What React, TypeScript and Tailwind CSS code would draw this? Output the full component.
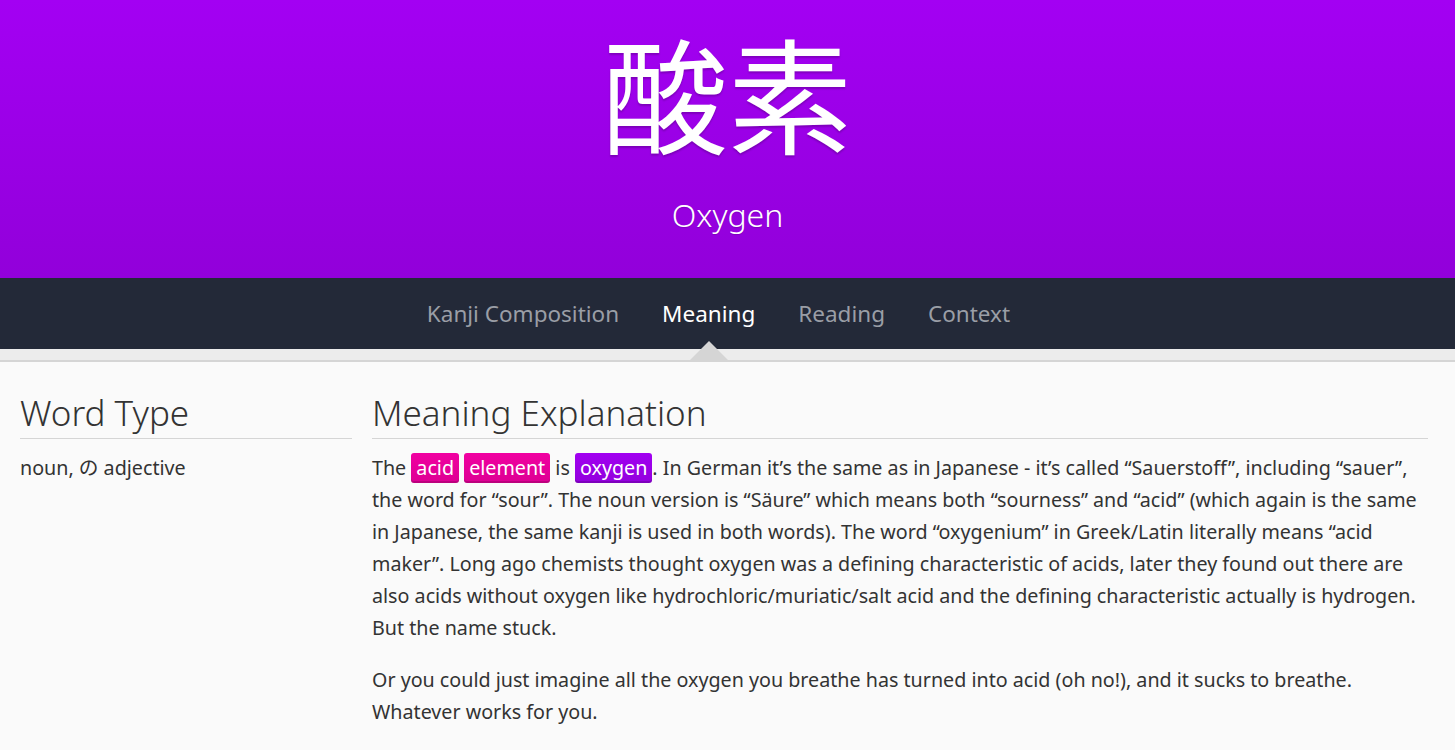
import React from "react";

const font = { fontFamily: '"Noto Sans", "Open Sans", "Noto Sans CJK JP", sans-serif' };

function Tag({ kind, children }: { kind: "pink" | "purple"; children: React.ReactNode }) {
  const cls =
    kind === "pink"
      ? "bg-gradient-to-b from-[#f100a1] to-[#dd0093] shadow-[inset_0_-2px_0_rgba(0,0,0,0.15)]"
      : "bg-gradient-to-b from-[#a100f1] to-[#9300dd] shadow-[inset_0_-2px_0_rgba(0,0,0,0.15)]";
  return (
    <span className={`${cls} inline-block rounded-[3px] px-[5px] leading-[30px] text-white`}>{children}</span>
  );
}

export default function App() {
  return (
    <div className="min-h-[750px] bg-[#fafafa] text-[#333]" style={font}>
      <header className="flex h-[278px] flex-col items-center bg-gradient-to-b from-[#a300f3] to-[#9200da] text-white">
        <div
          className="mt-[28px] text-[125px] leading-[125px] [text-shadow:0_2px_2px_rgba(0,0,0,0.2)]"
          style={{ fontFamily: '"Noto Sans CJK JP", sans-serif' }}
        >
          酸素
        </div>
        <div className="mt-[44px] text-[32px] font-light leading-[36px] [text-shadow:0_1px_1px_rgba(0,0,0,0.15)]">
          Oxygen
        </div>
      </header>
      <nav className="relative flex h-[71px] items-center justify-center gap-[43px] bg-[#232938] pr-[18px] text-[22.5px]">
        <span className="text-[#9a9ea6]">Kanji Composition</span>
        <span className="relative text-white">
          Meaning
          <span className="absolute left-1/2 top-[44px] z-10 h-0 w-0 -translate-x-1/2 border-x-[19px] border-b-[19px] border-x-transparent border-b-[#d5d5d5]" />
        </span>
        <span className="text-[#9a9ea6]">Reading</span>
        <span className="text-[#9a9ea6]">Context</span>
      </nav>
      <div className="h-[13px] border-b-2 border-[#d5d5d5] bg-[#ececec]" />
      <main className="grid grid-cols-[332px_1fr] gap-5 pl-5 pr-[27px] pt-[30px]">
        <section>
          <h2 className="border-b border-[#d5d5d5] pb-[5px] text-[35px] font-light leading-[41px]">Word Type</h2>
          <p className="mt-[13px] text-[19.7px] leading-[32px]">noun, の adjective</p>
        </section>
        <section>
          <h2 className="border-b border-[#d5d5d5] pb-[5px] text-[35px] font-light leading-[41px]">Meaning Explanation</h2>
          <div className="mt-[13px] text-[19.7px] leading-[32px]">
            <p className="mb-5">
              The <Tag kind="pink">acid</Tag> <Tag kind="pink">element</Tag> is <Tag kind="purple">oxygen</Tag>. In German
              it’s the same as in Japanese - it’s called “Sauerstoff”, including “sauer”, the word for “sour”. The noun
              version is “Säure” which means both “sourness” and “acid” (which again is the same in Japanese, the same
              kanji is used in both words). The word “oxygenium” in Greek/Latin literally means “acid maker”. Long ago
              chemists thought oxygen was a defining characteristic of acids, later they found out there are also acids
              without oxygen like hydrochloric/muriatic/salt acid and the defining characteristic actually is hydrogen.
              But the name stuck.
            </p>
            <p>
              Or you could just imagine all the oxygen you breathe has turned into acid (oh no!), and it sucks to breathe.
              Whatever works for you.
            </p>
          </div>
        </section>
      </main>
    </div>
  );
}
